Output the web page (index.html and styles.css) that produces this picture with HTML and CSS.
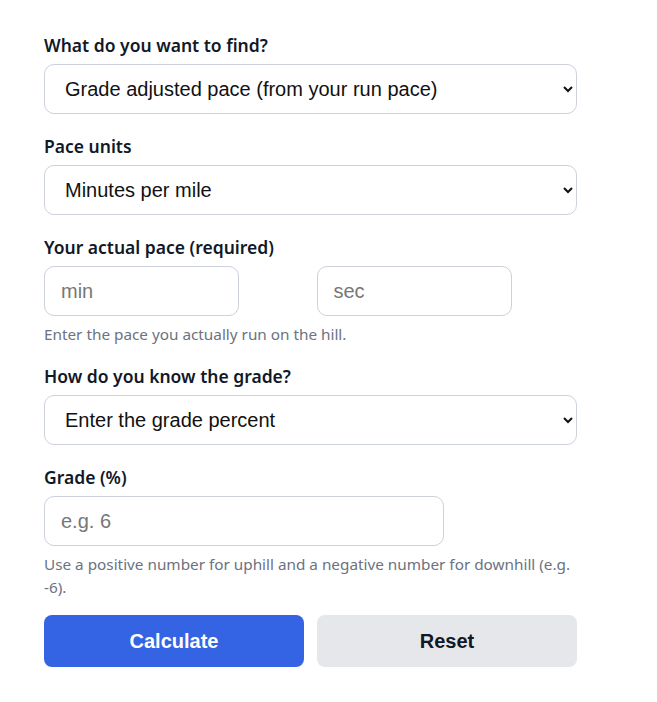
FILE: index.html
```html
<!DOCTYPE html>
<html lang="en">
<head>
    <meta charset="UTF-8">
    <meta name="viewport" content="width=device-width, initial-scale=1.0">
    <title>Grade Adjusted Pace Calculator</title>
    <link rel="stylesheet" href="styles.css">
</head>
<body>
    <form class="calc" onsubmit="return false">
        <div class="field">
            <label for="mode">What do you want to find?</label>
            <select id="mode">
                <option>Grade adjusted pace (from your run pace)</option>
                <option>Actual pace (from a target flat pace)</option>
            </select>
        </div>

        <div class="field">
            <label for="units">Pace units</label>
            <select id="units">
                <option>Minutes per mile</option>
                <option>Minutes per kilometer</option>
            </select>
        </div>

        <div class="field">
            <label for="pace_min">Your actual pace (required)</label>
            <div class="pair">
                <input type="number" id="pace_min" placeholder="min">
                <input type="number" id="pace_sec" placeholder="sec">
            </div>
            <p class="hint">Enter the pace you actually run on the hill.</p>
        </div>

        <div class="field">
            <label for="grade_mode">How do you know the grade?</label>
            <select id="grade_mode">
                <option>Enter the grade percent</option>
                <option>Enter distance and elevation gain</option>
            </select>
        </div>

        <div class="field">
            <label for="grade">Grade (%)</label>
            <input type="number" id="grade" class="wide" placeholder="e.g. 6">
            <p class="hint">Use a positive number for uphill and a negative number for downhill (e.g. -6).</p>
        </div>

        <div class="actions">
            <button type="submit" class="btn primary">Calculate</button>
            <button type="reset" class="btn secondary">Reset</button>
        </div>
    </form>
</body>
</html>
```

FILE: styles.css
```css
body {
    margin: 0;
    background: #fff;
    color: #111827;
    font-family: "Noto Sans", sans-serif;
}
.calc {
    width: 533px;
    padding: 33px 44px;
}
.field {
    margin-bottom: 20px;
}
.field:has(.hint) {
    margin-bottom: 18px;
}
label {
    display: block;
    font-size: 17.5px;
    font-weight: 600;
    line-height: 24px;
    margin-bottom: 7px;
}
select,
input {
    box-sizing: border-box;
    height: 50px;
    border: 1px solid #ccd1da;
    border-radius: 10px;
    background: #fff;
    color: #111;
    font-family: "Liberation Sans", Arial, sans-serif;
    font-size: 20px;
    padding: 0 16px;
}
select {
    width: 100%;
    padding-right: 10px;
}
input::placeholder {
    color: #777;
}
.pair {
    display: grid;
    grid-template-columns: 1fr 1fr;
    gap: 12px;
}
.pair input {
    width: 75%;
}
.wide {
    width: 75%;
}
.hint {
    margin: 7px 0 0;
    color: #6b7280;
    font-size: 15.3px;
    line-height: 23px;
}
.actions {
    display: grid;
    grid-template-columns: 1fr 1fr;
    gap: 13px;
    margin-top: -2px;
}
.btn {
    height: 52px;
    border: none;
    border-radius: 8px;
    font-family: "Liberation Sans", Arial, sans-serif;
    font-size: 20px;
    font-weight: 700;
}
.primary {
    background: #3464e4;
    color: #fff;
}
.secondary {
    background: #e5e7eb;
    color: #111827;
}
```
